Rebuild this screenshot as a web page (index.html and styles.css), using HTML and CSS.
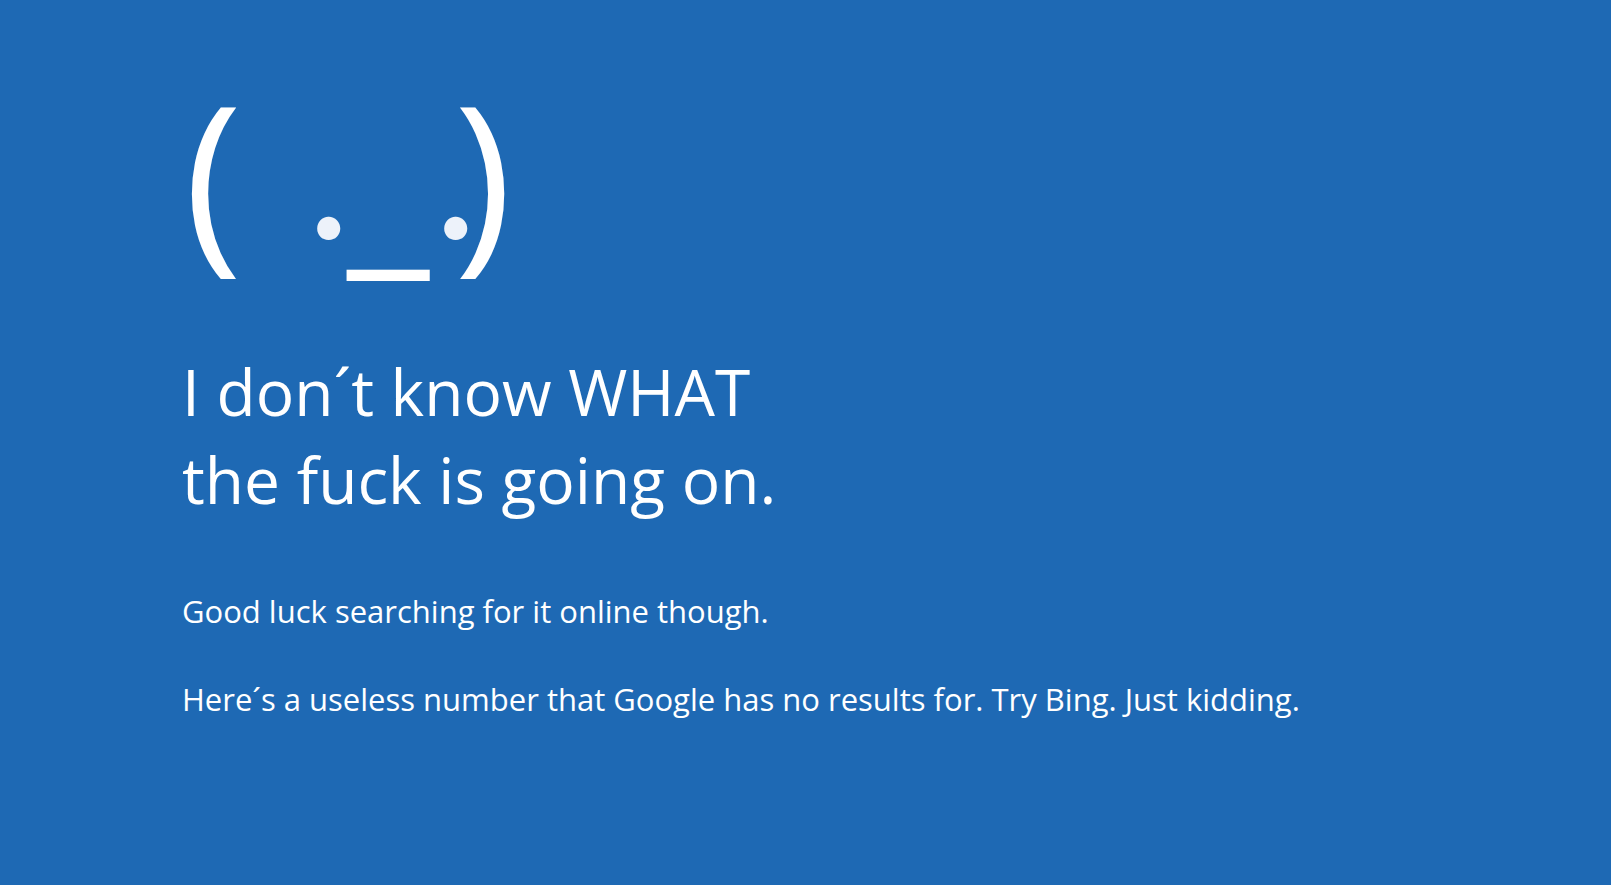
FILE: index.html
```html
<!DOCTYPE html>
<html lang="en">
<head>
<meta charset="utf-8">
<meta name="viewport" content="width=device-width, initial-scale=1">
<title>Error</title>
<link rel="stylesheet" href="styles.css">
</head>
<body>
<main class="screen">
  <svg class="face" viewBox="0 0 324 184" width="324" height="184">
    <text class="outline" x="2" y="144">(</text>
    <text class="eye" x="125" y="135">.</text>
    <text class="mouth" x="165" y="149">_</text>
    <text class="eye" x="252" y="135">.</text>
    <text class="outline" x="272" y="144">)</text>
  </svg>
  <h1 class="headline">I don´t know WHAT<br>the fuck is going on.</h1>
  <p class="detail">Good luck searching for it online though.</p>
  <p class="detail">Here´s a useless number that Google has no results for. Try Bing. Just kidding.</p>
</main>
</body>
</html>
```

FILE: styles.css
```css
body {
  margin: 0;
  min-height: 100vh;
  background: #1e69b4;
  color: #fff;
  font-family: "Segoe UI", "Open Sans", "Noto Sans", sans-serif;
}

.screen {
  padding: 104px 48px 48px 182px;
}

.face {
  display: block;
  overflow: visible;
  font-size: 197px;
  fill: #fff;
}

.eye {
  fill: #edf2fa;
  font-family: Lato, sans-serif;
  font-size: 184px;
}

.mouth {
  font-size: 188px;
}

.headline {
  margin: 60px 0 0;
  font-size: 64px;
  line-height: 88px;
  font-weight: 400;
}

.detail {
  margin: 44px 0 0;
  font-size: 31px;
  line-height: 44px;
}

.headline + .detail {
  margin-top: 65px;
}
```
